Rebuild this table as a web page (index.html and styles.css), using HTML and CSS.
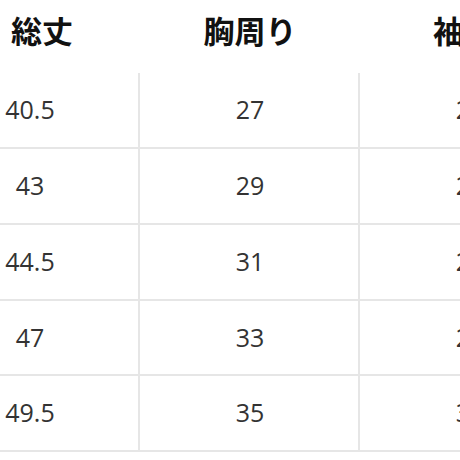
FILE: index.html
```html
<!DOCTYPE html>
<html lang="ja">
<head>
<meta charset="utf-8">
<link rel="stylesheet" href="styles.css">
</head>
<body>
<div class="size-table">
  <div class="th th-first">総丈</div>
  <div class="th">胸周り</div>
  <div class="th th-last">袖丈</div>

  <div class="td">40.5</div><div class="td">27</div><div class="td">24</div>
  <div class="td">43</div><div class="td">29</div><div class="td">25</div>
  <div class="td">44.5</div><div class="td">31</div><div class="td">27</div>
  <div class="td">47</div><div class="td">33</div><div class="td">29</div>
  <div class="td">49.5</div><div class="td">35</div><div class="td">31</div>
</div>
</body>
</html>
```
FILE: styles.css
```css
html, body {
  margin: 0;
  padding: 0;
  background: #ffffff;
  overflow: hidden;
}

.size-table {
  display: grid;
  grid-template-columns: 220px 220px 220px;
  grid-template-rows: 73px 76px 76px 76px 75px 76px;
  margin-left: -80px;
  width: max-content;
}

.th {
  box-sizing: border-box;
  height: 73px;
  padding-top: 14px;
  font-family: "Noto Sans CJK JP", "Noto Sans", sans-serif;
  font-weight: 700;
  font-size: 31px;
  line-height: 31px;
  color: #111111;
  text-align: center;
}

.th-first {
  padding-left: 24px;
}

.th-last {
  padding-right: 12px;
}

.td {
  box-sizing: border-box;
  display: flex;
  align-items: center;
  justify-content: center;
  padding-left: 2px;
  padding-bottom: 2px;
  border-right: 2px solid #e6e6e6;
  border-bottom: 2px solid #e6e6e6;
  font-family: "Open Sans", "Liberation Sans", sans-serif;
  font-size: 25px;
  color: #333333;
}
```
